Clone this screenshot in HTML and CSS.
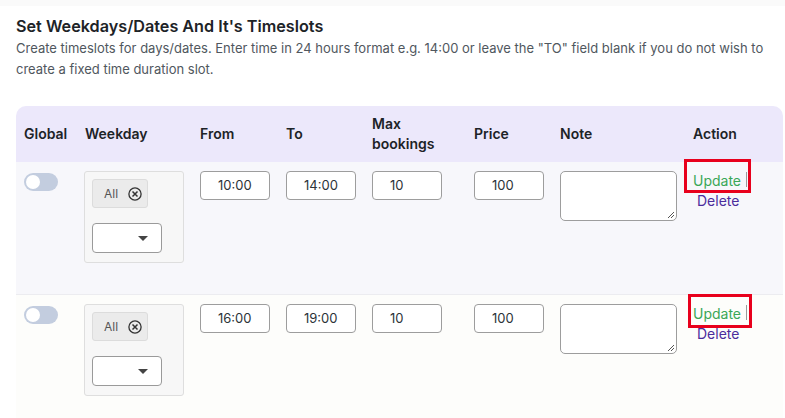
FILE: index.html
```html
<!DOCTYPE html>
<html>
<head>
<meta charset="utf-8">
<link rel="stylesheet" href="styles.css">
</head>
<body>
<div class="topbar"></div>
<div class="page">
  <h2 class="title">Set Weekdays/Dates And It's Timeslots</h2>
  <p class="desc">Create timeslots for days/dates. Enter time in 24 hours format e.g. 14:00 or leave the "TO" field blank if you do not wish to create a fixed time duration slot.</p>

  <div class="table">
    <div class="row head">
      <div class="cell">Global</div>
      <div class="cell">Weekday</div>
      <div class="cell">From</div>
      <div class="cell">To</div>
      <div class="cell">Max<br>bookings</div>
      <div class="cell">Price</div>
      <div class="cell">Note</div>
      <div class="cell">Action</div>
    </div>

    <div class="row body odd">
      <div class="cell"><span class="toggle"><span class="knob"></span></span></div>
      <div class="cell">
        <div class="wkbox">
          <div class="chip"><span>All</span><svg class="x" width="14" height="14" viewBox="0 0 14 14"><circle cx="7" cy="7" r="6.1" fill="none" stroke="#333" stroke-width="1.3"/><path d="M4.5 4.5 L9.5 9.5 M9.5 4.5 L4.5 9.5" stroke="#333" stroke-width="1.5"/></svg></div>
          <div class="select"><span class="arrow"></span></div>
        </div>
      </div>
      <div class="cell"><div class="inp">10:00</div></div>
      <div class="cell"><div class="inp">14:00</div></div>
      <div class="cell"><div class="inp">10</div></div>
      <div class="cell"><div class="inp">100</div></div>
      <div class="cell"><div class="note"><svg class="grip" width="9" height="9" viewBox="0 0 9 9"><path d="M8 2 L2 8 M8 5 L5 8" stroke="#555" stroke-width="1"/></svg></div></div>
      <div class="cell action">
        <span class="mark mark1"></span><span class="caret caret1"></span>
        <a class="upd">Update</a>
        <a class="del">Delete</a>
      </div>
    </div>

    <div class="row body even">
      <div class="cell"><span class="toggle"><span class="knob"></span></span></div>
      <div class="cell">
        <div class="wkbox">
          <div class="chip"><span>All</span><svg class="x" width="14" height="14" viewBox="0 0 14 14"><circle cx="7" cy="7" r="6.1" fill="none" stroke="#333" stroke-width="1.3"/><path d="M4.5 4.5 L9.5 9.5 M9.5 4.5 L4.5 9.5" stroke="#333" stroke-width="1.5"/></svg></div>
          <div class="select"><span class="arrow"></span></div>
        </div>
      </div>
      <div class="cell"><div class="inp">16:00</div></div>
      <div class="cell"><div class="inp">19:00</div></div>
      <div class="cell"><div class="inp">10</div></div>
      <div class="cell"><div class="inp">100</div></div>
      <div class="cell"><div class="note"><svg class="grip" width="9" height="9" viewBox="0 0 9 9"><path d="M8 2 L2 8 M8 5 L5 8" stroke="#555" stroke-width="1"/></svg></div></div>
      <div class="cell action">
        <span class="mark mark2"></span><span class="caret caret2"></span>
        <a class="upd">Update</a>
        <a class="del">Delete</a>
      </div>
    </div>
  </div>
</div>
</body>
</html>
```

FILE: styles.css
```css
* { box-sizing: border-box; }
html, body { margin: 0; padding: 0; background: #fff; }
body {
  font-family: Inter, "Noto Sans", "Liberation Sans", sans-serif;
  color: #1d2327;
  width: 785px;
  height: 418px;
  overflow: hidden;
}
.topbar { height: 6px; background: #fafafa; }
.page { padding: 9px 0 0 16px; }
.title {
  margin: 0;
  font-size: 16.2px;
  font-weight: 600;
  line-height: 22px;
  color: #1d2327;
}
.desc {
  margin: 1px 0 0;
  font-size: 13px;
  line-height: 21px;
  color: #50575e;
  width: 760px;
}
.table { margin-top: 26px; width: 767px; }
.row {
  display: grid;
  grid-template-columns: 61px 115px 86px 86px 102px 86px 133px 98px;
}
.head {
  background: #ece8fb;
  border-radius: 10px 10px 0 0;
  height: 56px;
  align-items: center;
  font-size: 14px;
  font-weight: 600;
  line-height: 20px;
  color: #1d2327;
}
.cell { padding: 0 8px; }
.body { padding-top: 9px; }
.odd { background: #f7f7fb; height: 133px; border-bottom: 1px solid #ececf0; }
.even { background: #fdfdfb; height: 130px; }

.toggle {
  display: block;
  width: 34px;
  height: 18px;
  margin-top: 2px;
  border-radius: 9px;
  background: #c3cddf;
  position: relative;
}
.knob {
  position: absolute;
  left: 2px;
  top: 2px;
  width: 14px;
  height: 14px;
  border-radius: 50%;
  background: #fff;
}
.wkbox {
  width: 100px;
  height: 92px;
  margin-left: -1px;
  background: #f7f7f7;
  border: 1px solid #dedede;
  border-radius: 3px;
  padding: 7px 0 0 7px;
}
.chip {
  width: 56px;
  height: 29px;
  background: #ebebeb;
  border: 1px solid #dcdcdc;
  border-radius: 3px;
  display: flex;
  align-items: center;
  font-size: 12px;
  color: #555;
  padding-left: 11px;
  gap: 10px;
}
.chip .x { display: block; margin-top: 1px; }
.select {
  margin-top: 15px;
  width: 70px;
  height: 30px;
  background: #fff;
  border: 1px solid #9a9a9a;
  border-radius: 4px;
  position: relative;
}
.arrow {
  position: absolute;
  right: 13px;
  top: 12px;
  border-left: 5px solid transparent;
  border-right: 5px solid transparent;
  border-top: 5px solid #444;
}
.inp {
  width: 70px;
  height: 29px;
  background: #fff;
  border: 1px solid #9d9d9d;
  border-radius: 4px;
  font-size: 13px;
  line-height: 27px;
  padding-left: 17px;
  color: #2c3338;
}
.note {
  width: 117px;
  height: 50px;
  background: #fff;
  border: 1px solid #9d9d9d;
  border-radius: 5px;
  position: relative;
}
.grip { position: absolute; right: 1px; bottom: 1px; }
.action { position: relative; font-size: 14px; line-height: 20px; }
.action a { display: block; }
.upd { color: #3aa757; }
.del { color: #4b2c9c; padding-left: 4px; }
.mark {
  position: absolute;
  border: 3px solid #e8001c;
  width: 67px;
  height: 34px;
}
.mark1 { left: -1px; top: -12px; }
.mark2 { left: 3px; top: -10px; width: 64px; }
.caret {
  position: absolute;
  width: 1px;
  height: 15px;
  background: #9a9a9a;
}
.caret1 { left: 61px; top: 1px; }
.caret2 { left: 61px; top: 1px; }
```
